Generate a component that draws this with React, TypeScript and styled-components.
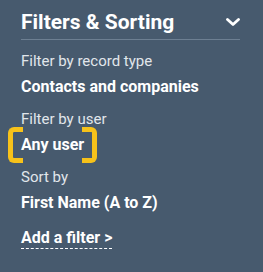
import { createGlobalStyle, styled } from 'styled-components'

const GlobalStyle = createGlobalStyle`
  html, body { margin: 0; padding: 0; background: #475a6e; }
  body { font-family: Roboto, 'Liberation Sans', sans-serif; }
`

const Panel = styled.section`
  width: 263px;
  height: 272px;
  box-sizing: border-box;
  padding: 0 23px 0 21px;
  background: #475a6e;
  color: #fff;
`

const Header = styled.div`
  display: flex;
  align-items: center;
  justify-content: space-between;
  padding: 8px 0 3px;
  border-bottom: 1px solid #6d7f92;
`

const Title = styled.h2`
  margin: 0;
  font-size: 21px;
  line-height: 28px;
  font-weight: 700;
`

const Toggle = styled.button`
  display: flex;
  align-items: center;
  padding: 0;
  margin: 0;
  border: 0;
  background: none;
  color: #fff;
  cursor: pointer;
`

const List = styled.div`
  display: flex;
  flex-direction: column;
  gap: 8px;
  padding-top: 9px;
`

const Group = styled.div`
  display: flex;
  flex-direction: column;
`

const Label = styled.div`
  font-size: 15px;
  line-height: 25px;
  color: #e1e6eb;
`

const Value = styled.div<{ $focused?: boolean }>`
  position: relative;
  align-self: flex-start;
  font-size: 16px;
  line-height: 25px;
  font-weight: 700;
  color: #fff;

  ${p => p.$focused && `
    &::before, &::after {
      content: '';
      position: absolute;
      top: -5px;
      bottom: -6px;
      width: 10px;
      border: 5px solid #f7c21a;
      border-radius: 6px;
    }
    &::before { left: -13px; border-right: 0; border-top-right-radius: 0; border-bottom-right-radius: 0; }
    &::after { right: -13px; border-left: 0; border-top-left-radius: 0; border-bottom-left-radius: 0; }
  `}
`

const AddLink = styled.a`
  align-self: flex-start;
  margin-top: 5px;
  font-size: 16px;
  line-height: 20px;
  font-weight: 700;
  color: #fff;
  text-decoration: none;
  border-bottom: 1px dashed #fff;
  cursor: pointer;
`

const filters = [
  { label: 'Filter by record type', value: 'Contacts and companies' },
  { label: 'Filter by user', value: 'Any user', focused: true },
  { label: 'Sort by', value: 'First Name (A to Z)' },
]

export default function App() {
  return (
    <>
      <GlobalStyle />
      <Panel>
        <Header>
          <Title>Filters &amp; Sorting</Title>
          <Toggle aria-label="Collapse">
            <svg width="14" height="10" viewBox="0 0 14 10">
              <path d="M1.5 2.5 L7 7.5 L12.5 2.5" fill="none" stroke="#fff" strokeWidth="2.8" strokeLinecap="round" strokeLinejoin="round" />
            </svg>
          </Toggle>
        </Header>
        <List>
          {filters.map(f => (
            <Group key={f.label}>
              <Label>{f.label}</Label>
              <Value $focused={f.focused}>{f.value}</Value>
            </Group>
          ))}
          <AddLink>Add a filter &gt;</AddLink>
        </List>
      </Panel>
    </>
  )
}
